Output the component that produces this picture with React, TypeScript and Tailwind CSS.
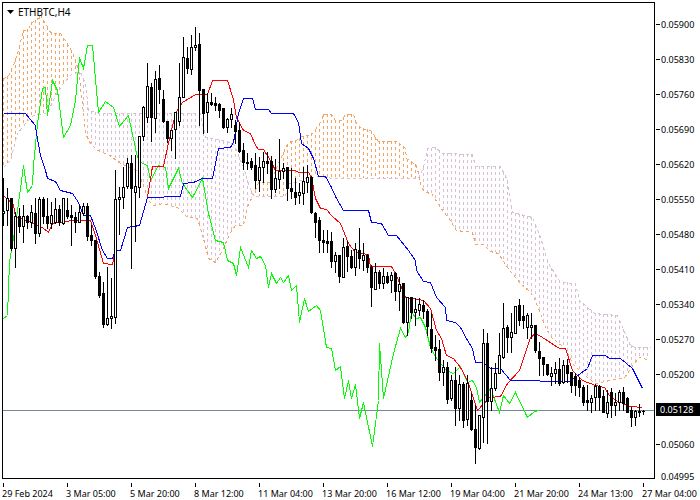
// ETHBTC H4 chart with Ichimoku
type Pt = [number, number];
// body top, body bottom, high, low, filled
type Bar = [number, number, number, number, number];

const bars: Bar[] = [
  [211, 213, 178, 225, 0], [198, 210, 188, 225, 0], [198, 248, 198, 250, 1], [216, 248, 212, 267, 0],
  [216, 226, 208, 232, 1], [216, 226, 205, 242, 0], [216, 222, 215, 228, 1], [212, 222, 205, 227, 0],
  [213, 233, 198, 243, 1], [199, 233, 197, 236, 0], [199, 216, 197, 223, 1], [216, 223, 198, 228, 1],
  [215, 223, 202, 228, 0], [209, 222, 198, 223, 0], [209, 222, 205, 225, 1], [198, 223, 198, 224, 0],
  [210, 216, 198, 218, 1], [215, 217, 205, 245, 1], [217, 222, 212, 232, 1], [212, 222, 205, 222, 0],
  [206, 213, 203, 215, 0], [206, 236, 203, 240, 1], [235, 240, 225, 245, 1], [240, 276, 240, 278, 1],
  [276, 295, 272, 297, 1], [293, 324, 282, 327, 1], [318, 324, 267, 325, 0], [316, 318, 278, 328, 0],
  [199, 317, 170, 323, 0], [197, 199, 187, 234, 0], [187, 197, 167, 208, 0], [163, 186, 158, 188, 0],
  [163, 188, 155, 268, 1], [186, 192, 155, 241, 0], [136, 187, 136, 197, 0], [107, 136, 106, 140, 0],
  [86, 117, 63, 122, 0], [87, 117, 83, 141, 1], [79, 118, 71, 132, 0], [78, 89, 65, 103, 1],
  [99, 121, 90, 122, 1], [121, 138, 121, 142, 1], [130, 138, 130, 150, 0], [112, 129, 112, 158, 0],
  [97, 121, 63, 125, 0], [57, 97, 37, 97, 0], [58, 68, 47, 73, 1], [47, 69, 35, 74, 0],
  [45, 47, 27, 50, 0], [44, 90, 33, 125, 1], [89, 113, 89, 133, 1], [102, 112, 93, 132, 0],
  [102, 104, 93, 105, 1], [103, 105, 97, 110, 1], [104, 110, 103, 117, 1], [108, 127, 108, 128, 1],
  [119, 127, 118, 132, 0], [114, 119, 108, 127, 0], [125, 131, 120, 143, 1], [130, 151, 122, 152, 1],
  [150, 162, 143, 169, 1], [162, 163, 153, 169, 1], [161, 167, 158, 169, 1], [165, 180, 153, 188, 1],
  [167, 180, 157, 191, 0], [161, 167, 152, 182, 0], [161, 163, 152, 173, 1], [161, 189, 156, 198, 1],
  [178, 189, 159, 192, 0], [171, 179, 139, 188, 0], [168, 171, 163, 178, 0], [167, 188, 167, 200, 1],
  [188, 191, 168, 198, 1], [192, 197, 178, 204, 1], [192, 195, 183, 203, 0], [181, 193, 167, 204, 0],
  [177, 182, 165, 192, 0], [177, 212, 176, 213, 1], [213, 222, 212, 237, 1], [220, 240, 217, 252, 1],
  [240, 242, 230, 252, 1], [241, 243, 230, 252, 1], [241, 261, 232, 267, 1], [255, 261, 252, 272, 0],
  [255, 276, 255, 282, 1], [247, 277, 238, 277, 0], [246, 256, 241, 271, 1], [256, 267, 250, 268, 1],
  [249, 267, 243, 275, 0], [250, 258, 228, 268, 1], [255, 260, 243, 270, 0], [255, 267, 254, 272, 1],
  [267, 287, 265, 306, 1], [272, 289, 263, 289, 0], [272, 283, 270, 288, 1], [276, 283, 268, 288, 0],
  [276, 282, 272, 283, 1], [275, 280, 272, 292, 0], [273, 291, 272, 300, 1], [284, 291, 277, 310, 0],
  [283, 322, 283, 323, 1], [297, 322, 297, 335, 0], [297, 312, 297, 318, 1], [309, 312, 298, 325, 0],
  [304, 310, 298, 315, 0], [305, 311, 300, 318, 1], [311, 326, 309, 335, 1], [329, 348, 313, 352, 1],
  [347, 350, 335, 360, 1], [349, 372, 340, 380, 1], [367, 372, 360, 385, 0], [367, 399, 362, 403, 1],
  [380, 398, 375, 400, 0], [380, 408, 367, 425, 1], [384, 408, 375, 420, 0], [384, 420, 382, 427, 1],
  [383, 419, 375, 425, 0], [400, 429, 393, 430, 1], [429, 447, 405, 463, 1], [415, 448, 415, 449, 0],
  [343, 417, 329, 442, 0], [343, 401, 333, 443, 1], [388, 401, 367, 410, 0], [373, 388, 363, 390, 0],
  [355, 373, 333, 373, 0], [328, 357, 303, 358, 0], [327, 337, 325, 352, 1], [332, 337, 313, 352, 0],
  [306, 333, 306, 333, 0], [305, 320, 299, 325, 1], [316, 320, 305, 328, 1], [315, 327, 313, 338, 0],
  [325, 327, 313, 338, 0], [325, 350, 325, 352, 1], [351, 358, 342, 375, 1], [357, 364, 357, 375, 1],
  [364, 374, 364, 375, 1], [373, 376, 367, 385, 0], [369, 373, 362, 383, 0], [369, 383, 358, 385, 1],
  [365, 382, 360, 383, 0], [365, 373, 359, 382, 1], [372, 385, 372, 392, 1], [376, 385, 373, 395, 1],
  [380, 387, 377, 396, 1], [387, 402, 385, 405, 1], [400, 402, 385, 410, 1], [398, 402, 395, 412, 0],
  [386, 397, 384, 410, 0], [386, 397, 385, 410, 1], [396, 412, 390, 412, 1], [402, 413, 390, 417, 0],
  [392, 405, 388, 417, 1], [402, 405, 393, 415, 0], [392, 402, 390, 410, 0], [392, 403, 387, 410, 1],
  [398, 412, 397, 412, 1], [410, 417, 407, 426, 1], [411, 417, 410, 425, 0], [411, 412, 404, 416, 1],
  [411, 411, 410, 414, 1],
];

const spanA: Pt[] = [
  [3, 78], [8, 76], [14, 62], [18, 50], [23, 30], [28, 29], [31, 22], [36, 20], [40, 15], [45, 23], [50, 32], [55, 33],
  [60, 33], [66, 42], [72, 52], [75, 60], [78, 70], [83, 113], [85, 133], [90, 143], [97, 150], [108, 154], [120, 163],
  [137, 170], [143, 185], [148, 200], [153, 205], [163, 203], [177, 207], [187, 217], [197, 218], [203, 238], [208, 258],
  [215, 262], [222, 250], [230, 232], [235, 225], [243, 225], [248, 203], [253, 195], [258, 182], [270, 182], [278, 163],
  [285, 148], [288, 142], [296, 140], [301, 136], [308, 135], [313, 132], [321, 120], [323, 114], [331, 114], [335, 120],
  [341, 120], [345, 114], [353, 114], [356, 123], [361, 128], [370, 130], [378, 141], [396, 141], [405, 148], [406, 158],
  [416, 165], [418, 173], [421, 187], [425, 192], [431, 193], [440, 207], [450, 220], [456, 230], [472, 232], [475, 244],
  [483, 244], [490, 251], [498, 253], [507, 267], [519, 282], [530, 292], [535, 300], [545, 327], [552, 338], [565, 348],
  [572, 363], [582, 373], [595, 383], [610, 380], [624, 377], [634, 363], [639, 357], [650, 360],
];
const spanB: Pt[] = [
  [3, 167], [10, 160], [17, 133], [25, 123], [33, 115], [47, 113], [55, 95], [63, 83], [72, 73], [80, 72], [85, 83],
  [88, 110], [100, 113], [200, 113], [205, 137], [213, 138], [233, 143], [243, 167], [248, 183], [253, 196], [285, 196],
  [288, 183], [295, 182], [308, 177], [320, 176], [333, 178], [418, 178], [423, 167], [427, 148], [435, 147], [442, 153],
  [472, 154], [475, 166], [500, 166], [507, 180], [512, 212], [532, 217], [540, 237], [548, 263], [560, 282], [575, 283],
  [579, 300], [594, 313], [617, 315], [630, 345], [635, 347], [650, 347],
];
const kijun: Pt[] = [
  [3, 113], [25, 113], [29, 118], [35, 125], [36, 133], [40, 155], [45, 170], [47, 178], [55, 181], [60, 190], [72, 193],
  [78, 202], [83, 215], [90, 215], [95, 228], [102, 250], [107, 258], [112, 258], [115, 250], [120, 250], [127, 227],
  [139, 225], [147, 197], [180, 196], [183, 183], [193, 182], [202, 178], [212, 178], [218, 148], [230, 147], [233, 142],
  [238, 113], [243, 98], [252, 98], [255, 109], [268, 109], [271, 113], [293, 113], [298, 122], [301, 143], [308, 148],
  [313, 158], [318, 176], [325, 176], [331, 187], [336, 198], [343, 210], [368, 210], [371, 222], [381, 223], [388, 235],
  [396, 235], [408, 250], [415, 260], [416, 270], [423, 281], [430, 282], [436, 297], [445, 307], [446, 320], [455, 322],
  [460, 327], [467, 340], [472, 348], [475, 362], [482, 362], [490, 368], [500, 368], [510, 380], [569, 381], [580, 373],
  [587, 368], [592, 355], [605, 355], [609, 358], [620, 358], [632, 368], [642, 388],
];
const tenkan: Pt[] = [
  [3, 195], [13, 204], [15, 216], [33, 223], [42, 227], [48, 232], [52, 223], [72, 220], [90, 220], [95, 235], [103, 263],
  [112, 264], [115, 250], [120, 250], [127, 227], [139, 225], [147, 197], [152, 166], [163, 166], [167, 147], [175, 113],
  [182, 102], [195, 94], [207, 94], [212, 80], [227, 80], [233, 99], [236, 117], [243, 130], [250, 133], [255, 145], [258, 149],
  [263, 149], [270, 160], [275, 170], [295, 170], [298, 172], [308, 172], [311, 177], [315, 198], [320, 208], [326, 209],
  [331, 215], [340, 223], [348, 243], [355, 252], [368, 254], [370, 266], [391, 266], [396, 275], [401, 287], [405, 297],
  [423, 300], [430, 308], [436, 330], [441, 338], [446, 355], [453, 358], [460, 367], [467, 380], [477, 410], [489, 397],
  [500, 396], [507, 383], [519, 370], [530, 337], [535, 333], [542, 337], [559, 348], [565, 348], [572, 370], [582, 380],
  [595, 385], [604, 387], [609, 395], [615, 400], [630, 406], [642, 407],
];
const chikou: Pt[] = [
  [3, 318], [7, 315], [9, 262], [15, 225], [20, 188], [23, 165], [27, 192], [32, 185], [33, 165], [37, 123], [42, 88],
  [45, 87], [47, 115], [52, 80], [57, 90], [63, 137], [70, 125], [75, 100], [79, 57], [83, 68], [87, 45], [92, 45],
  [98, 112], [105, 101], [113, 107], [119, 126], [128, 115], [137, 157], [140, 162], [147, 165], [150, 180], [158, 165],
  [165, 167], [168, 188], [178, 168], [182, 183], [192, 197], [202, 178], [208, 213], [215, 240], [223, 242], [227, 260],
  [233, 263], [236, 275], [240, 247], [248, 267], [251, 250], [256, 258], [260, 256], [265, 265], [268, 287], [271, 273],
  [276, 283], [280, 277], [283, 282], [288, 275], [291, 290], [296, 285], [299, 322], [304, 298], [308, 311], [316, 305],
  [320, 310], [326, 347], [331, 348], [335, 370], [340, 366], [344, 398], [348, 380], [351, 398], [355, 384], [359, 418],
  [363, 402], [372, 446], [378, 400], [379, 343], [383, 398], [393, 353], [400, 328], [405, 337], [408, 332], [411, 312],
  [416, 318], [420, 317], [425, 327], [430, 347], [436, 358], [446, 370], [453, 373], [460, 366], [467, 382], [472, 380],
  [476, 387], [479, 402], [490, 388], [499, 412], [503, 395], [509, 403], [515, 392], [527, 417], [534, 411], [539, 410],
];

const pts = (p: Pt[]) => p.map(([x, y]) => `${x + 0.5},${y + 0.5}`).join(" ");

function at(line: Pt[], x: number) {
  for (let i = 1; i < line.length; i++) {
    if (x <= line[i][0]) {
      const [x0, y0] = line[i - 1];
      const [x1, y1] = line[i];
      return y0 + ((y1 - y0) * (x - x0)) / (x1 - x0);
    }
  }
  return line[line.length - 1][1];
}

const hatchX = Array.from({ length: 162 }, (_, i) => 3 + i * 4);

const priceRows = [
  "0.05900", "0.05830", "0.05760", "0.05690", "0.05620", "0.05550", "0.05480",
  "0.05410", "0.05340", "0.05270", "0.05200", "0.05128", "0.05060",
];
const timeLabels = [
  "29 Feb 2024", "3 Mar 05:00", "5 Mar 20:00", "8 Mar 12:00", "11 Mar 04:00", "13 Mar 20:00",
  "16 Mar 12:00", "19 Mar 04:00", "21 Mar 20:00", "24 Mar 13:00", "27 Mar 04:00",
];

function ChartLines() {
  return (
    <svg width={651} height={475} viewBox="3 3 651 475" shapeRendering="crispEdges" className="block">
      {hatchX.map((x) => {
        const a = at(spanA, x);
        const b = at(spanB, x);
        return (
          <line
            key={x}
            x1={x + 0.5}
            x2={x + 0.5}
            y1={Math.min(a, b)}
            y2={Math.max(a, b)}
            stroke={a < b ? "#f4a460" : "#d8bfd8"}
            strokeDasharray="3 3"
          />
        );
      })}
      <polyline points={pts(spanA)} fill="none" stroke="#f4a460" strokeDasharray="3 3" />
      <polyline points={pts(spanB)} fill="none" stroke="#d8bfd8" strokeDasharray="3 3" />
      <line x1={3} x2={654} y1={410.5} y2={410.5} stroke="#778899" />
      <polyline points={pts(chikou)} fill="none" stroke="#00ff00" />
      <polyline points={pts(tenkan)} fill="none" stroke="#ff0000" />
      <polyline points={pts(kijun)} fill="none" stroke="#0000ff" />
      {bars.map((b, i) => {
        const x = 3 + i * 4;
        return (
          <g key={i}>
            <rect x={x} y={b[2]} width={1} height={b[3] - b[2] + 1} fill="#000" />
            {b[4] ? (
              <rect x={x - 1} y={b[0]} width={3} height={b[1] - b[0] + 1} fill="#000" />
            ) : (
              <rect x={x - 0.5} y={b[0] + 0.5} width={2} height={b[1] - b[0]} fill="#fff" stroke="#000" />
            )}
          </g>
        );
      })}
    </svg>
  );
}

export default function App() {
  return (
    <div className="w-[700px] h-[500px] bg-white text-black overflow-hidden font-['Noto_Sans',sans-serif]">
      <div className="flex pl-[2px] pt-[2px]">
        <div className="relative w-[653px] h-[477px] border-l border-t border-r border-b border-black">
          <ChartLines />
          <div className="absolute left-[4px] top-[2px] flex items-center gap-[4px] text-[10px] leading-[14px]">
            <svg width={7} height={4} viewBox="0 0 7 4">
              <polygon points="0,0 7,0 3.5,4" fill="#000" />
            </svg>
            <span>ETHBTC,H4</span>
          </div>
        </div>
        <div className="pt-[5px]">
          {priceRows.map((p) =>
            p === "0.05128" ? (
              <div key={p} className="h-[35px] flex items-center">
                <div className="ml-[1px] w-[44px] h-[13px] bg-black text-white text-[9px] leading-[13px] pl-[4px]">{p}</div>
              </div>
            ) : (
              <div key={p} className="h-[35px] flex items-center gap-[1px]">
                <div className="ml-px w-[4px] h-px bg-black" />
                <span className="text-[9px] leading-[12px]">{p}</span>
              </div>
            ),
          )}
          <div className="h-[12px] mt-[9px] pl-[6px] text-[9px] leading-[12px]">0.04995</div>
        </div>
      </div>
      <div className="flex pl-[3px]">
        {timeLabels.map((t) => (
          <div key={t} className="w-[64px] shrink-0">
            <div className="w-px h-[4px] bg-black" />
            <div className="-ml-[1px] mt-[1px] text-[9px] leading-[12px] whitespace-nowrap">{t}</div>
          </div>
        ))}
      </div>
    </div>
  );
}
